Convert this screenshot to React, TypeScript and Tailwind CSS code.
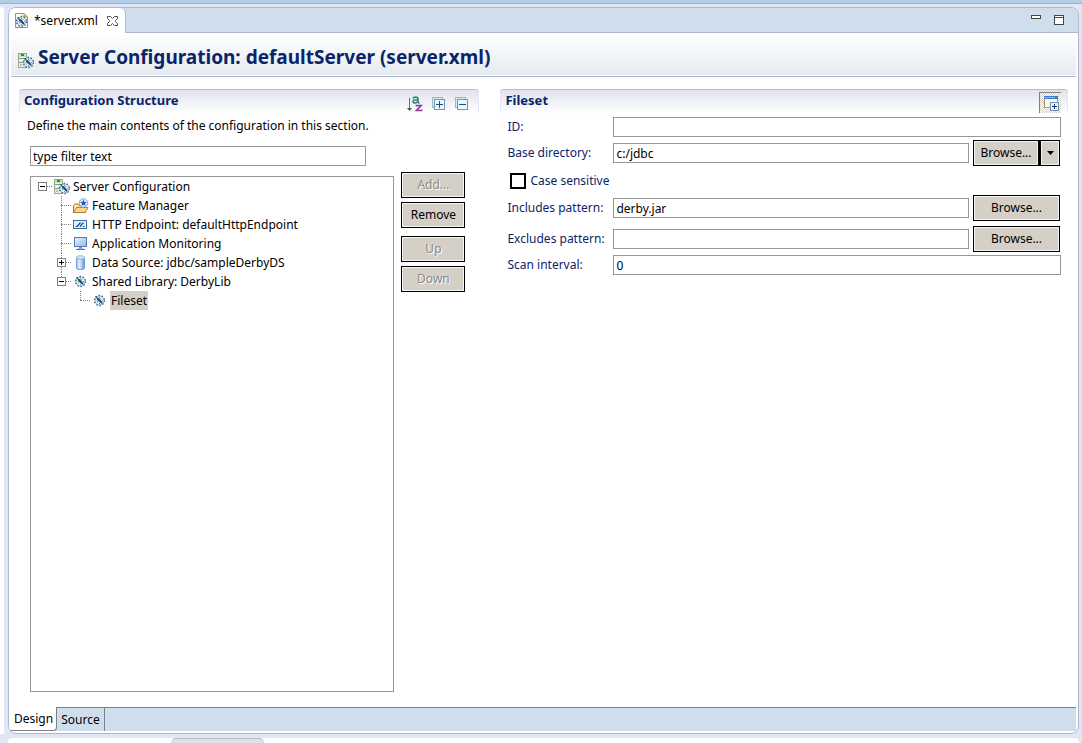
import React, { useState } from "react";
import clsx from "clsx";

function Gear({ x, y }: { x: number; y: number }) {
  return (
    <g transform={`translate(${x} ${y})`}>
      <circle cx="5.5" cy="5.5" r="4.5" fill="#eef5f9" stroke="#9dbdd2" strokeWidth="1" />
      <circle cx="5.5" cy="5.5" r="5" fill="none" stroke="#2c638e" strokeWidth="1.3" strokeDasharray="1.4 1.74" />
      <path d="M1.5 1.5L4 4" stroke="#2c638e" strokeWidth="1.2" />
      <path d="M3.5 3.5L8 8" stroke="#173f6c" strokeWidth="1.8" />
      <path d="M5.5 2V3.500M7.500 3.500L6.500 4.500M8 5.500H9M2.500 5.500H3.500M3.500 7.500L4.500 6.500M5.500 8V9" stroke="#5d90b2" strokeWidth="1" fill="none" />
      <path d="M6 3.500H7M3 6.500H4" stroke="#9accac" />
    </g>
  );
}

function GearIcon() {
  return (
    <svg width="16" height="16" viewBox="0 0 16 16" aria-hidden="true">
      <Gear x={2} y={2} />
    </svg>
  );
}

function ServerIcon() {
  return (
    <svg width="16" height="16" viewBox="0 0 16 16" aria-hidden="true">
      <rect x="0.5" y="0.5" width="8" height="14" fill="#eceee2" stroke="#9aa694" />
      <rect x="1" y="1" width="7" height="3" fill="#c4e8b8" />
      <rect x="3" y="1" width="3" height="2" fill="#109c28" />
      <path d="M1 5.500H8M1 9.500H6" stroke="#8a9a86" />
      <rect x="2" y="7" width="2" height="1" fill="#fff" />
      <rect x="2" y="11" width="2" height="2" fill="#b9c4a8" />
      <Gear x={5} y={4} />
    </svg>
  );
}

function XmlFileIcon() {
  return (
    <svg width="16" height="16" viewBox="0 0 16 16" aria-hidden="true">
      <path d="M1.500 0.500H10L13.500 4V14.500H1.500Z" fill="#fdfbf4" stroke="#b5924a" />
      <path d="M10 0.500V4H13.500Z" fill="#f0c878" stroke="#c89a48" />
      <Gear x={2} y={3} />
    </svg>
  );
}

function FeatureIcon() {
  return (
    <svg width="16" height="16" viewBox="0 0 16 16" aria-hidden="true">
      <path d="M0.500 14.500V7.500L2 6H5L6 7.500H12.500V14.500Z" fill="#fbe3a0" stroke="#b87a28" />
      <path d="M0.500 14.500L3.500 9.500H15L12 14.500Z" fill="#fbd68c" stroke="#b87a28" />
      <circle cx="10.500" cy="5" r="4.300" fill="#d6e6fa" stroke="#7aa2dc" />
      <path d="M10.500 1.800L11.400 4H13.600L11.900 5.400L12.500 7.700L10.500 6.400L8.500 7.700L9.100 5.400L7.400 4H9.600Z" fill="#1c4fb4" />
    </svg>
  );
}

function EndpointIcon() {
  return (
    <svg width="16" height="16" viewBox="0 0 16 16" aria-hidden="true">
      <rect x="0.500" y="3.500" width="13" height="8" fill="#e2f0fc" stroke="#3a6ea8" />
      <path d="M2.500 9.500H4M4 9.500L7.500 5.500M7 9.500L10.500 5.500M10 9.500H11.500" stroke="#1e4f94" strokeWidth="1.200" fill="none" />
    </svg>
  );
}

function MonitorIcon() {
  return (
    <svg width="16" height="16" viewBox="0 0 16 16" aria-hidden="true">
      <defs>
        <linearGradient id="screen" x1="0" y1="0" x2="1" y2="1">
          <stop offset="0" stopColor="#eaf4ff" />
          <stop offset="1" stopColor="#8db8ea" />
        </linearGradient>
      </defs>
      <rect x="1.500" y="1.500" width="12" height="9" fill="url(#screen)" stroke="#5577b4" />
      <rect x="6" y="11" width="3" height="1" fill="#7e92bc" />
      <path d="M3 13.500H12" stroke="#5571a6" />
      <path d="M5 12.500H10" stroke="#a8b8d8" />
    </svg>
  );
}

function DatabaseIcon() {
  return (
    <svg width="16" height="16" viewBox="0 0 16 16" aria-hidden="true">
      <defs>
        <linearGradient id="cylinder">
          <stop offset="0" stopColor="#8fc0f0" />
          <stop offset="0.35" stopColor="#e4f2ff" />
          <stop offset="1" stopColor="#5c9ae0" />
        </linearGradient>
      </defs>
      <path d="M3.500 2.500V13C3.500 15 11.500 15 11.500 13V2.500Z" fill="url(#cylinder)" stroke="#6a9cd8" />
      <ellipse cx="7.500" cy="2.500" rx="4" ry="1.800" fill="#d2e8fc" stroke="#8ab4e4" />
    </svg>
  );
}

function SortIcon() {
  return (
    <svg width="16" height="16" viewBox="0 0 16 16" aria-hidden="true">
      <path d="M2.500 2V12" stroke="#4a7a9c" />
      <path d="M0 12H5L2.500 15Z" fill="#4d5560" />
      <path d="M6 2.500C6.500 1 11 .5 11 2.500V7M11 4H8C5.500 4 5.500 7 8 7C9.500 7 11 6 11 5M11 7H12.500" fill="none" stroke="#2c8a78" strokeWidth="1.700" />
      <path d="M9.500 10.500V9.500H14L9.500 14.500H14.500V13.500" fill="none" stroke="#8e3c9c" strokeWidth="1.700" />
    </svg>
  );
}

function StackIcon({ plus }: { plus?: boolean }) {
  return (
    <svg width="14" height="14" viewBox="0 0 14 14" aria-hidden="true" shapeRendering="crispEdges">
      <rect x="0.500" y="0.500" width="10" height="10" fill="#d6eaf2" stroke="#9ab8c8" />
      <rect x="2.500" y="2.500" width="10" height="10" fill="#e8f6fc" stroke="#7896b4" />
      <path d={plus ? "M4 7.500H11M7.500 4V11" : "M4 7.500H11"} stroke="#14528c" />
    </svg>
  );
}

function DetailsIcon() {
  return (
    <svg width="16" height="16" viewBox="0 0 16 16" aria-hidden="true" shapeRendering="crispEdges">
      <rect x="1.500" y="1.500" width="13" height="11" fill="#f2f8fe" stroke="#8aa4c4" />
      <rect x="1" y="1" width="14" height="3" fill="#3c7cc4" />
      <rect x="1" y="2" width="11" height="1" fill="#86b8ec" />
      <rect x="1" y="5" width="1" height="7" fill="#b09040" />
      <rect x="7.500" y="7.500" width="8" height="8" fill="#e8f0fa" stroke="#7a90b4" />
      <path d="M9 11.500H14M11.500 9V14" stroke="#1e3c78" />
    </svg>
  );
}

function CloseIcon() {
  return (
    <svg width="12" height="12" viewBox="0 0 12 12" aria-hidden="true">
      <path
        d="M0.500 1.500H3.500L5.500 3.500L7.500 1.500H10.500V3.500L8.500 5.500V6.500L10.500 8.500V10.500H7.500L5.500 8.500L3.500 10.500H0.500V8.500L2.500 6.500V5.500L0.500 3.500Z"
        fill="#fff"
        stroke="#4c4c4c"
      />
    </svg>
  );
}

type ButtonProps = React.ButtonHTMLAttributes<HTMLButtonElement>;

function PushButton({ className, ...rest }: ButtonProps) {
  return (
    <button
      type="button"
      className={clsx(
        "flex h-[26px] items-center justify-center border border-black bg-[#d4d0c8] shadow-[inset_0_0_0_1px_#f6f5f2] disabled:text-[#8a8a86] disabled:[text-shadow:1px_1px_0_#fff]",
        className,
      )}
      {...rest}
    />
  );
}

function TextBox({ className, ...rest }: React.InputHTMLAttributes<HTMLInputElement>) {
  return (
    <input
      type="text"
      className={clsx("h-5 min-w-0 border border-[#979797] bg-white px-[2px] text-black outline-none", className)}
      {...rest}
    />
  );
}

function SectionHeader({ title, children }: { title: string; children?: React.ReactNode }) {
  return (
    <div className="flex h-6 items-start justify-between rounded-t-[4px] border-t border-[#b4bcd0] bg-linear-to-b from-[#dfe3ee] to-white shadow-[inset_1px_0_0_#e4e7f0,inset_-1px_0_0_#e4e7f0]">
      <h2 className="pl-[5px] text-[13px] leading-[21px] font-bold text-[#0a246a]">{title}</h2>
      {children}
    </div>
  );
}

type Node = {
  label: string;
  icon: React.ReactNode;
  depth: number;
  last?: boolean;
  state?: "open" | "closed";
  selected?: boolean;
};

const nodes: Node[] = [
  { label: "Server Configuration", icon: <ServerIcon />, depth: 0, last: true, state: "open" },
  { label: "Feature Manager", icon: <FeatureIcon />, depth: 1 },
  { label: "HTTP Endpoint: defaultHttpEndpoint", icon: <EndpointIcon />, depth: 1 },
  { label: "Application Monitoring", icon: <MonitorIcon />, depth: 1 },
  { label: "Data Source: jdbc/sampleDerbyDS", icon: <DatabaseIcon />, depth: 1, state: "closed" },
  { label: "Shared Library: DerbyLib", icon: <GearIcon />, depth: 1, last: true, state: "open" },
  { label: "Fileset", icon: <GearIcon />, depth: 2, last: true, selected: true },
];

function TreeRow({ node }: { node: Node }) {
  return (
    <li role="treeitem" aria-selected={!!node.selected} className="flex h-[19px] items-center">
      {Array.from({ length: node.depth }, (_, i) => (
        <span key={i} className="w-[19px] shrink-0" />
      ))}
      <span className="relative grid h-[19px] w-[19px] shrink-0 grid-cols-[9px_10px] grid-rows-[9px_10px]">
        <span />
        <span className={clsx("border-dotted border-[#808080]", node.depth > 0 && "border-l")} />
        <span />
        <span className={clsx("border-t border-dotted border-[#808080]", !node.last && "border-l")} />
        {node.state && (
          <button
            type="button"
            aria-label={node.state === "open" ? "Collapse" : "Expand"}
            className="absolute top-[5px] left-[5px] flex h-[9px] w-[9px] items-center justify-center border border-[#808080] bg-white"
          >
            <svg width="5" height="5" viewBox="0 0 5 5" shapeRendering="crispEdges" aria-hidden="true">
              <path d={node.state === "open" ? "M0 2.500H5" : "M0 2.500H5M2.500 0V5"} stroke="#000" />
            </svg>
          </button>
        )}
      </span>
      <span className="ml-[2px] shrink-0">{node.icon}</span>
      <span className={clsx("ml-[2px] px-px leading-[19px] whitespace-nowrap", node.selected && "bg-[#d4d0c8]")}>
        {node.label}
      </span>
    </li>
  );
}

function ConfigurationStructure() {
  const [filter, setFilter] = useState("type filter text");
  return (
    <section className="flex min-h-0 flex-col">
      <SectionHeader title="Configuration Structure">
        <div className="flex items-center gap-[9px] pt-[6px] pr-[10px]">
          <button type="button" aria-label="Sort alphabetically">
            <SortIcon />
          </button>
          <button type="button" aria-label="Expand all">
            <StackIcon plus />
          </button>
          <button type="button" aria-label="Collapse all">
            <StackIcon />
          </button>
        </div>
      </SectionHeader>
      <p className="mt-[3px] pl-2 leading-5">Define the main contents of the configuration in this section.</p>
      <div className="mt-[10px] flex pr-[113px] pl-[11px]">
        <TextBox
          aria-label="Filter"
          className="grow"
          value={filter}
          onChange={(e) => setFilter(e.target.value)}
        />
      </div>
      <div className="mt-[10px] flex min-h-0 flex-1 gap-[7px] pr-[14px] pl-[11px]">
        <ul role="tree" className="min-w-0 flex-1 border border-[#979797] bg-white pl-[2px]">
          {nodes.map((n) => (
            <TreeRow key={n.label} node={n} />
          ))}
        </ul>
        <div className="-mt-[4px] flex w-16 shrink-0 flex-col gap-1">
          <PushButton disabled>Add...</PushButton>
          <PushButton>Remove</PushButton>
          <PushButton disabled className="mt-1">
            Up
          </PushButton>
          <PushButton disabled>Down</PushButton>
        </div>
      </div>
    </section>
  );
}

function Field({ id, label, value, children }: { id: string; label: string; value?: string; children?: React.ReactNode }) {
  return (
    <div className="flex items-center">
      <label htmlFor={id} className="w-[106px] shrink-0 whitespace-nowrap text-[#0a246a]">
        {label}
      </label>
      <TextBox id={id} defaultValue={value} className="flex-1" />
      {children}
    </div>
  );
}

function FilesetDetails() {
  return (
    <section>
      <SectionHeader title="Fileset">
        <button
          type="button"
          aria-label="Show details"
          className="mt-[2px] mr-[7px] flex h-[21px] w-[22px] items-center justify-center border-t border-l border-[#808080] bg-[repeating-conic-gradient(#d4d0c8_0_25%,#fff_0_50%)] bg-[length:2px_2px]"
        >
          <DetailsIcon />
        </button>
      </SectionHeader>
      <form className="flex flex-col pt-1 pr-[7px] pl-[7px]">
        <Field id="fileset-id" label="ID:" />
        <div className="mt-[3px]">
          <Field id="base" label="Base directory:" value="c:/jdbc">
            <PushButton className="ml-1 w-[66px]">Browse...</PushButton>
            <PushButton className="mr-px w-[21px] border-l-2" aria-label="More locations">
              <svg width="7" height="4" viewBox="0 0 7 4" aria-hidden="true">
                <path d="M0 0H7L3.500 4Z" />
              </svg>
            </PushButton>
          </Field>
        </div>
        <div className="mt-[6px] flex h-[17px] items-center gap-1 pl-[3px] text-[#0a246a]">
          <input
            id="case"
            type="checkbox"
            className="h-4 w-4 appearance-none border-2 border-black bg-white checked:bg-[#0a246a]"
          />
          <label htmlFor="case">Case sensitive</label>
        </div>
        <div className="mt-[6px]">
          <Field id="includes" label="Includes pattern:" value="derby.jar">
            <PushButton className="mr-px ml-1 w-[87px]">Browse...</PushButton>
          </Field>
        </div>
        <div className="mt-[5px]">
          <Field id="excludes" label="Excludes pattern:">
            <PushButton className="mr-px ml-1 w-[87px]">Browse...</PushButton>
          </Field>
        </div>
        <div className="mt-[3px]">
          <Field id="scan" label="Scan interval:" value="0" />
        </div>
      </form>
    </section>
  );
}

export default function App() {
  return (
    <div className="flex h-screen min-h-[480px] flex-col overflow-hidden bg-[#e0e6f5] font-['Noto_Sans','Open_Sans',sans-serif] text-[12px] leading-4 text-black">
      <div className="h-1 shrink-0 border-b border-[#9fb4cc] bg-[#b3cde6]" />
      <div className="flex min-h-0 flex-1 pt-[3px]">
        <div className="mr-1 w-1 shrink-0 rounded-tr-[4px] bg-white" />
        <main className="mr-[3px] flex min-w-0 flex-1 flex-col overflow-hidden rounded-[8px] border border-[#b0b8d0] bg-white">
          <div className="flex h-[25px] shrink-0 items-stretch bg-[#cfdeed]">
            <div className="flex items-center rounded-tr-[6px] border-r border-[#b0b8d0] bg-white pr-[6px] pl-[5px]">
              <XmlFileIcon />
              <span className="pl-1 whitespace-nowrap">*server.xml</span>
              <button type="button" aria-label="Close" className="pl-[9px]">
                <CloseIcon />
              </button>
            </div>
            <div className="flex flex-1 items-start justify-end gap-[13px] border-b border-[#b0b8d0] pt-[7px] pr-[14px]">
              <button type="button" aria-label="Minimize" className="h-1 w-[10px] border border-[#444] bg-white" />
              <button
                type="button"
                aria-label="Maximize"
                className="h-[10px] w-[10px] border border-[#444] bg-white shadow-[inset_0_1px_0_#fff,inset_0_2px_0_#444]"
              />
            </div>
          </div>
          <header className="mx-[2px] shrink-0 border-b border-[#b0b8d8] pb-px">
            <div className="flex h-[42px] items-end gap-1 bg-linear-to-b from-white to-[#e6ebf0] pb-[6px] pl-[7px]">
              <ServerIcon />
              <h1 className="text-[19px] leading-6 font-bold whitespace-nowrap text-[#0a246a]">
                Server Configuration: defaultServer (server.xml)
              </h1>
            </div>
          </header>
          <div className="grid min-h-0 flex-1 grid-cols-[460fr_567fr] gap-[21px] px-[10px] pt-3 pb-[15px]">
            <ConfigurationStructure />
            <FilesetDetails />
          </div>
          <nav className="mr-[2px] mb-[2px] flex h-6 shrink-0 bg-[#cfdeed]">
            <button type="button" className="rounded-br-[4px] border-r border-b border-[#808080] bg-white pr-[3px] pl-[5px]">
              Design
            </button>
            <div className="flex flex-1 border-t border-[#808080]">
              <button type="button" className="border-r border-[#808080] px-1">
                Source
              </button>
            </div>
          </nav>
        </main>
      </div>
      <div className="mt-1 mr-[3px] ml-2 h-[5px] shrink-0 rounded-t-[4px] bg-white">
        <div className="ml-[163px] h-full w-[93px] rounded-t-[6px] border-t border-[#b8bcc8] bg-[#dfe0e8]" />
      </div>
    </div>
  );
}
